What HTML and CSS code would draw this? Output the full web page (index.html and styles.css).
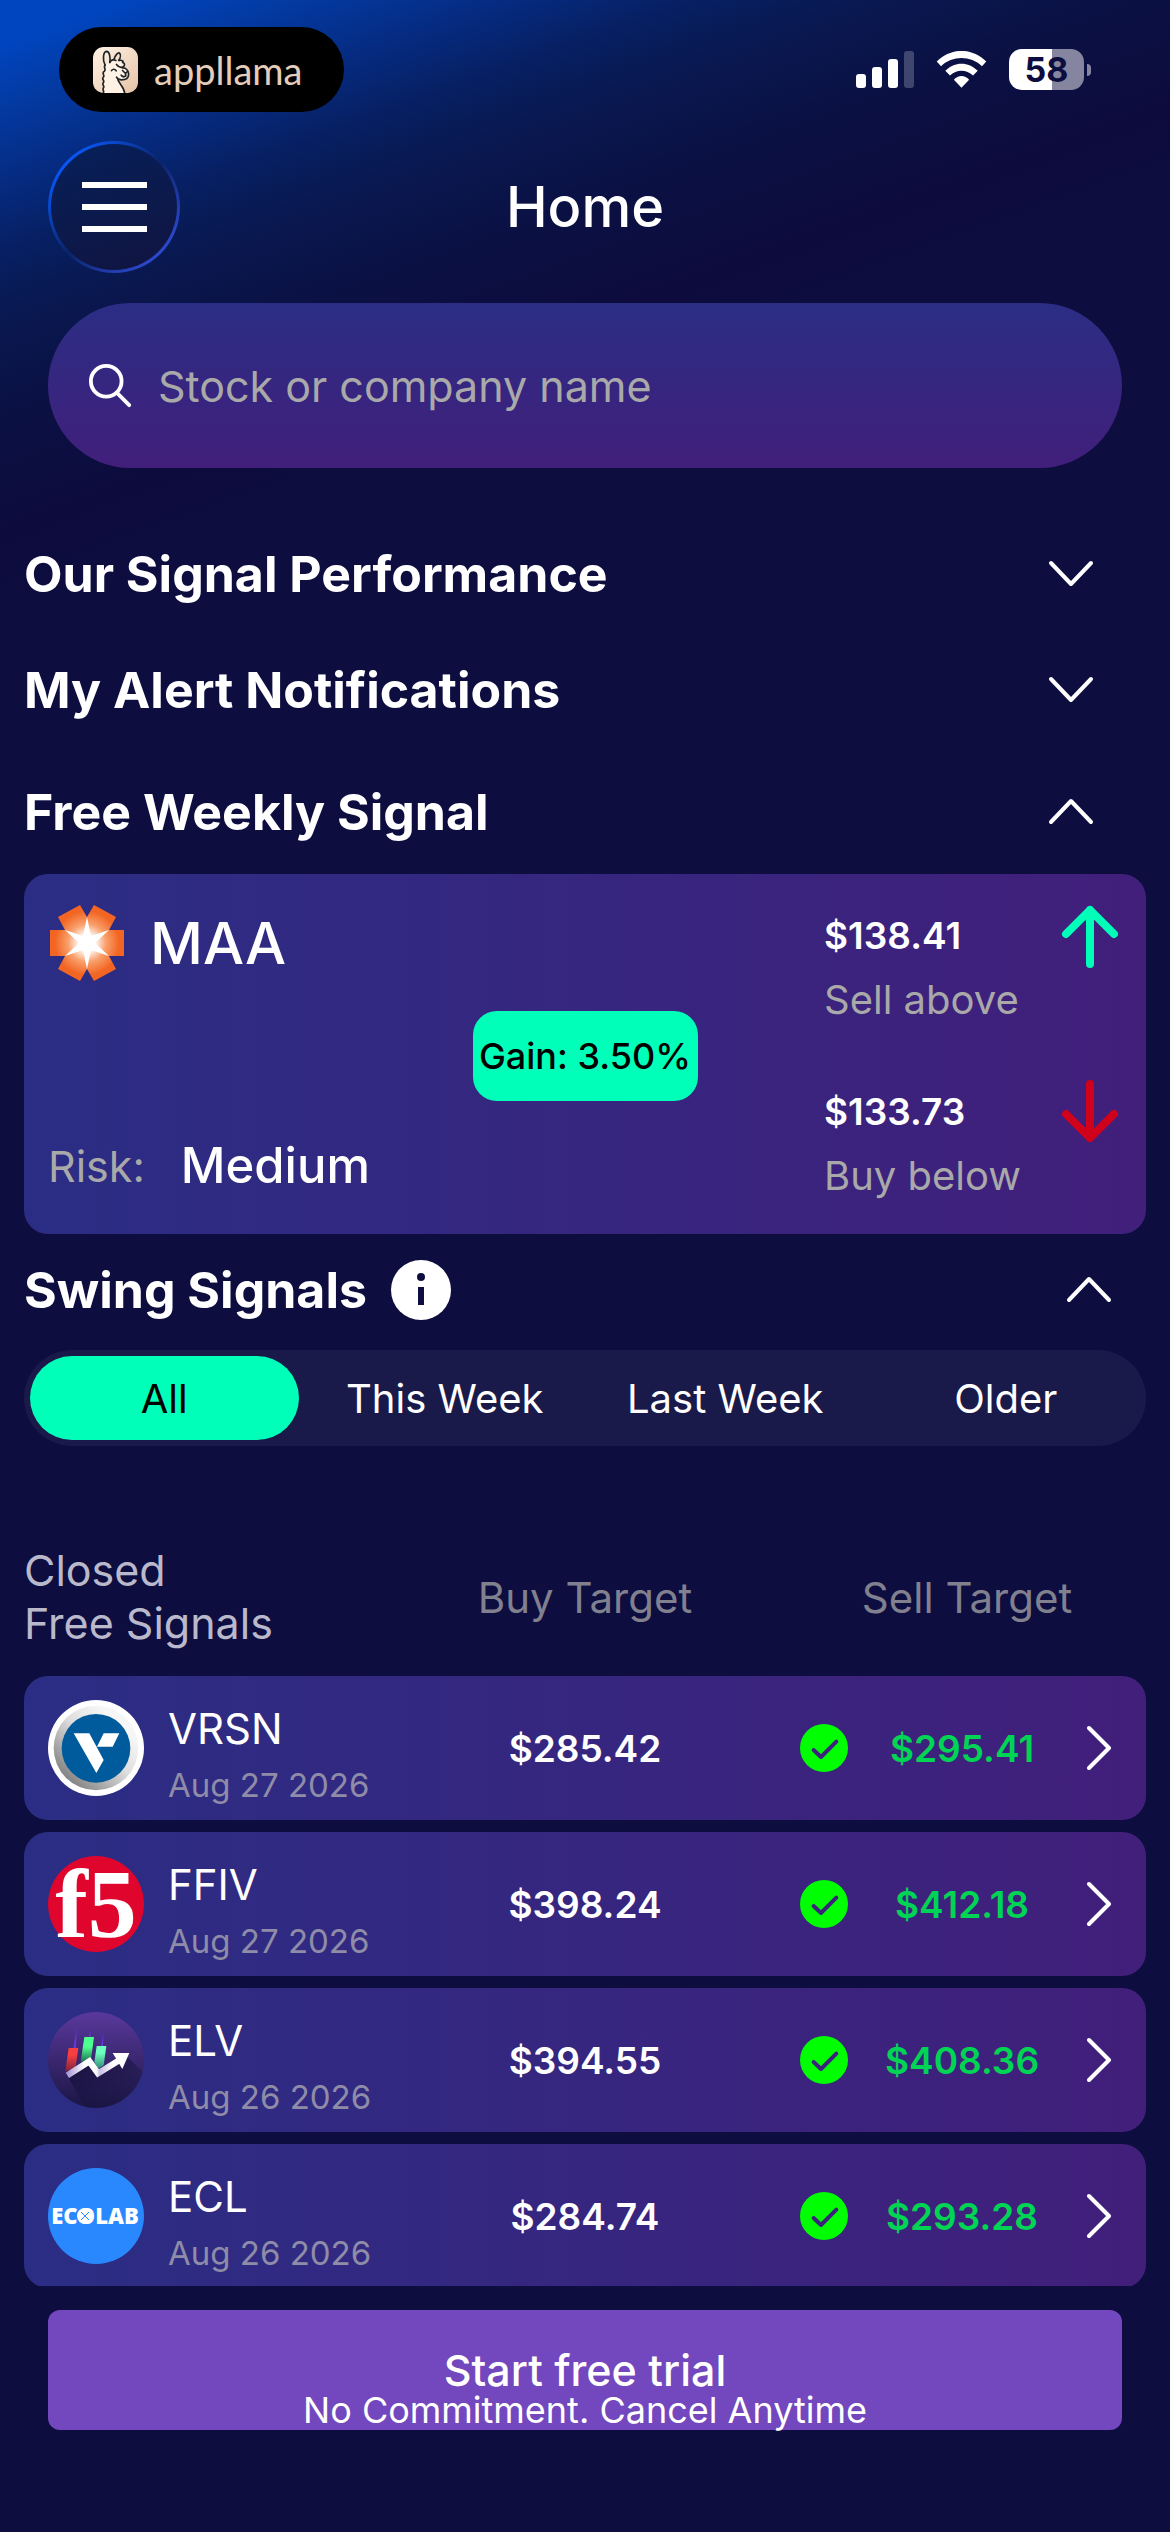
FILE: index.html
```html
<!DOCTYPE html>
<html lang="en">
<head>
    <meta charset="UTF-8">
    <meta name="viewport" content="width=device-width, initial-scale=1.0">
    <title>Home</title>
    <link rel="stylesheet" href="styles.css">
</head>
<body>

<!-- shared icons -->
<svg class="sprite" aria-hidden="true">
    <symbol id="chevron-down" viewBox="0 0 48 32"><path d="M4 5 L24 26 L44 5"/></symbol>
    <symbol id="chevron-up" viewBox="0 0 48 32"><path d="M4 26 L24 5 L44 26"/></symbol>
    <symbol id="chevron-right" viewBox="0 0 24 48"><path d="M2 4 L22 24 L2 44"/></symbol>
    <symbol id="check" viewBox="0 0 144 144">
        <circle cx="72" cy="72" r="72" fill="#00ff00"/>
        <path d="M41 78 L63 99 L109 53" fill="none" stroke="#3b237d" stroke-width="12" stroke-linecap="round" stroke-linejoin="round"/>
    </symbol>
</svg>

<div class="status-bar">
    <div class="island">
        <svg class="llama" viewBox="0 0 134 137" aria-hidden="true">
            <defs>
                <linearGradient id="tile" x1="0" y1="0" x2="1" y2="1">
                    <stop offset="0" stop-color="#fff3e6"/>
                    <stop offset="1" stop-color="#e6c3a6"/>
                </linearGradient>
            </defs>
            <rect width="134" height="137" rx="32" fill="url(#tile)"/>
            <path d="M36 54 C26 70 34 100 30 137 H94 C92 118 80 108 74 97 C94 102 108 92 106 80 C104 68 98 62 88 60 C96 54 96 48 88 46 C90 40 84 38 78 40 L50 44Z" fill="#fff1e3"/>
            <g fill="none" stroke="#1f2428" stroke-width="5" stroke-linecap="round" stroke-linejoin="round">
                <path d="M36 54 C28 40 30 14 40 13 C50 13 52 32 50 46"/>
                <path d="M62 38 C66 24 74 16 79 18 C83 22 82 32 77 40"/>
                <path d="M50 46 C54 38 62 36 68 40 M77 40 C86 38 92 42 88 46 C96 48 96 56 88 60 C80 62 74 58 70 52"/>
                <path d="M88 62 C100 62 106 72 106 82 C106 94 96 98 84 98 C76 97 72 94 70 90 M74 97 C78 110 92 120 94 136"/>
                <path d="M36 54 C30 60 40 66 34 72 C24 76 36 84 31 90 C24 96 36 100 31 106 C25 111 36 117 31 122 C27 128 34 130 31 136"/>
                <path d="M55 70 Q62 62 69 71 M88 70 L97 79 L103 72 M97 79 V86 M84 84 Q90 92 98 86"/>
            </g>
        </svg>
        <span class="island-name">appllama</span>
    </div>
    <div class="status-icons">
        <svg class="signal" viewBox="0 0 58 37" aria-hidden="true">
            <rect x="0" y="23" width="10" height="14" rx="3"/>
            <rect x="16" y="16" width="10" height="21" rx="3"/>
            <rect x="32" y="8" width="10" height="29" rx="3"/>
            <rect x="48" y="0" width="10" height="37" rx="3" opacity=".22"/>
        </svg>
        <svg class="wifi" viewBox="0 0 152 112" aria-hidden="true">
            <path d="M1 32 C44 -11 108 -11 151 32 L138 46 C103 13 49 13 14 46Z"/>
            <path d="M27 60 C55 31 97 31 125 60 L111 74 C91 55 61 55 41 74Z"/>
            <path d="M53 87 C66 72 86 72 99 87 L76 111Z"/>
        </svg>
        <div class="battery"><span class="battery-level">58</span></div>
    </div>
</div>

<header class="app-bar">
    <button class="menu-btn" aria-label="Menu">
        <span class="menu-line"></span>
        <span class="menu-line"></span>
        <span class="menu-line"></span>
    </button>
    <h1>Home</h1>
</header>

<form class="search" role="search">
    <svg class="search-icon" viewBox="0 0 48 48" aria-hidden="true">
        <circle cx="19" cy="19" r="16"/>
        <path d="M30 31 L43 44"/>
    </svg>
    <input type="search" aria-label="Stock or company name" placeholder="Stock or company name">
</form>

<main>
    <h2><button class="accordion">Our Signal Performance <svg class="chevron"><use href="#chevron-down"/></svg></button></h2>
    <h2><button class="accordion">My Alert Notifications <svg class="chevron"><use href="#chevron-down"/></svg></button></h2>

    <section class="weekly">
        <h2><button class="accordion" aria-expanded="true">Free Weekly Signal <svg class="chevron"><use href="#chevron-up"/></svg></button></h2>
        <div class="card">
            <div class="card-left">
                <div class="ticker">
                    <svg class="ticker-logo" viewBox="-39 -39 78 78" aria-hidden="true">
                        <defs>
                            <radialGradient id="glow" gradientUnits="userSpaceOnUse" cx="0" cy="0" r="38">
                                <stop offset="0.2" stop-color="#fff"/>
                                <stop offset="0.5" stop-color="#f9a06c"/>
                                <stop offset="0.85" stop-color="#f26522"/>
                            </radialGradient>
                        </defs>
                        <path fill="url(#glow)" d="M-37 -13 H-22 L-29 -26 L-7 -38 L0 -26 L7 -38 L29 -26 L22 -13 H37 V13 H22 L29 26 L7 38 L0 26 L-7 38 L-29 26 L-22 13 H-37Z"/>
                        <path fill="#fff" d="M0 -26 L4 -7 L22 -13 L8 0 L22 13 L4 7 L0 26 L-4 7 L-22 13 L-8 0 L-22 -13 L-4 -7Z"/>
                    </svg>
                    <span class="ticker-name">MAA</span>
                </div>
                <div class="risk"><span class="risk-label">Risk:</span> <span class="risk-value">Medium</span></div>
            </div>
            <div class="gain">Gain: 3.50%</div>
            <div class="targets">
                <div class="target">
                    <div>
                        <div class="target-price">$138.41</div>
                        <div class="target-label">Sell above</div>
                    </div>
                    <svg class="arrow arrow-up" viewBox="0 0 64 64" aria-hidden="true"><path d="M32 60 V6 M8 30 L32 6 L56 30"/></svg>
                </div>
                <div class="target">
                    <div>
                        <div class="target-price">$133.73</div>
                        <div class="target-label">Buy below</div>
                    </div>
                    <svg class="arrow arrow-down" viewBox="0 0 64 64" aria-hidden="true"><path d="M32 4 V58 M8 34 L32 58 L56 34"/></svg>
                </div>
            </div>
        </div>
    </section>

    <section>
        <div class="swing-head">
            <h2>Swing Signals</h2>
            <button class="icon-btn" aria-label="About swing signals">
                <svg class="info" viewBox="0 0 60 60">
                    <circle cx="30" cy="30" r="30" fill="#fff"/>
                    <circle cx="30" cy="17" r="4" fill="#0d0d40"/>
                    <rect x="27" y="27" width="6" height="18" fill="#0d0d40"/>
                </svg>
            </button>
            <button class="icon-btn swing-toggle" aria-label="Collapse"><svg class="chevron"><use href="#chevron-up"/></svg></button>
        </div>

        <div class="tabs">
            <button class="tab active">All</button>
            <button class="tab">This Week</button>
            <button class="tab">Last Week</button>
            <button class="tab">Older</button>
        </div>

        <table class="signals">
            <thead>
                <tr><th class="th-name">Closed<br>Free Signals</th><th>Buy Target</th><th class="th-sell">Sell Target</th></tr>
            </thead>
            <tbody>
                <tr>
                    <td class="company">
                        <svg class="logo" viewBox="0 0 288 288" aria-hidden="true">
                            <defs>
                                <linearGradient id="ring" x1="0.15" y1="0.85" x2="0.75" y2="0.2">
                                    <stop offset="0" stop-color="#858585"/>
                                    <stop offset="0.6" stop-color="#dedede"/>
                                    <stop offset="1" stop-color="#f6f6f6"/>
                                </linearGradient>
                            </defs>
                            <circle cx="144" cy="144" r="144" fill="#fff"/>
                            <circle cx="144" cy="144" r="127" fill="url(#ring)"/>
                            <circle cx="144" cy="145" r="103" fill="#005b9c"/>
                            <path fill="#fff" d="M77 100 H124 L167 180 L145 219Z M167 100 H214 L194 140 H147Z"/>
                        </svg>
                        <div class="company-text"><div class="symbol">VRSN</div><div class="date">Aug 27 2026</div></div>
                    </td>
                    <td class="buy">$285.42</td>
                    <td class="sell">
                        <svg class="check"><use href="#check"/></svg>
                        <span class="sell-price">$295.41</span>
                        <a class="more" href="#vrsn" aria-label="VRSN details"><svg><use href="#chevron-right"/></svg></a>
                    </td>
                </tr>
                <tr>
                    <td class="company">
                        <svg class="logo" viewBox="0 0 96 96" aria-hidden="true">
                            <circle cx="48" cy="48" r="48" fill="#e0052d"/>
                            <text class="f5-text" x="48" y="81" text-anchor="middle">f5</text>
                        </svg>
                        <div class="company-text"><div class="symbol">FFIV</div><div class="date">Aug 27 2026</div></div>
                    </td>
                    <td class="buy">$398.24</td>
                    <td class="sell">
                        <svg class="check"><use href="#check"/></svg>
                        <span class="sell-price">$412.18</span>
                        <a class="more" href="#ffiv" aria-label="FFIV details"><svg><use href="#chevron-right"/></svg></a>
                    </td>
                </tr>
                <tr>
                    <td class="company">
                        <svg class="logo" viewBox="0 0 288 288" aria-hidden="true">
                            <defs>
                                <linearGradient id="elv-bg" x1="0" y1="0" x2="0" y2="1">
                                    <stop offset="0" stop-color="#5a389c"/>
                                    <stop offset="1" stop-color="#1a1644"/>
                                </linearGradient>
                                <linearGradient id="red" x1="0" y1="0" x2="0" y2="1">
                                    <stop offset="0.3" stop-color="#f83e3e"/>
                                    <stop offset="1" stop-color="#7c2440"/>
                                </linearGradient>
                                <linearGradient id="green" x1="0" y1="0" x2="0" y2="1">
                                    <stop offset="0.4" stop-color="#4dff8e"/>
                                    <stop offset="1" stop-color="#1e6d55"/>
                                </linearGradient>
                                <linearGradient id="teal" x1="0" y1="0" x2="0" y2="1">
                                    <stop offset="0.3" stop-color="#6dffbd"/>
                                    <stop offset="1" stop-color="#318a78"/>
                                </linearGradient>
                                <linearGradient id="line" gradientUnits="userSpaceOnUse" x1="52" y1="0" x2="244" y2="0">
                                    <stop offset="0" stop-color="#9d8bd0"/>
                                    <stop offset="0.3" stop-color="#fff"/>
                                    <stop offset="0.48" stop-color="#fff"/>
                                    <stop offset="0.54" stop-color="#cabfe6"/>
                                    <stop offset="0.75" stop-color="#fff"/>
                                </linearGradient>
                                <linearGradient id="shade" x1="0" y1="0" x2="1" y2="1">
                                    <stop offset="0" stop-color="#140f38"/>
                                    <stop offset="1" stop-color="#1a1644" stop-opacity="0"/>
                                </linearGradient>
                            </defs>
                            <circle cx="144" cy="144" r="144" fill="url(#elv-bg)"/>
                            <path fill="url(#shade)" d="M62 198 L126 152 L150 190 L238 134 L284 180 A144 144 0 0 1 110 284Z"/>
                            <path fill="#6a35e0" d="M86 48 L84 108 H76Z M127 56 L128 74 H122Z M166 60 L165 102 H159Z"/>
                            <path fill="url(#red)" d="M62 108 H91 L82 172 L52 178Z"/>
                            <path fill="url(#green)" d="M109 75 H138 L129 142 L98 150Z"/>
                            <path fill="url(#teal)" d="M146 102 H175 L167 160 L150 170 L139 150Z"/>
                            <path d="M58 190 L124 148 L150 184 L218 142" fill="none" stroke="url(#line)" stroke-width="19"/>
                            <path fill="#fff" d="M194 123 H244 L223 171Z"/>
                        </svg>
                        <div class="company-text"><div class="symbol">ELV</div><div class="date">Aug 26 2026</div></div>
                    </td>
                    <td class="buy">$394.55</td>
                    <td class="sell">
                        <svg class="check"><use href="#check"/></svg>
                        <span class="sell-price">$408.36</span>
                        <a class="more" href="#elv" aria-label="ELV details"><svg><use href="#chevron-right"/></svg></a>
                    </td>
                </tr>
                <tr>
                    <td class="company">
                        <svg class="logo" viewBox="0 0 96 96" aria-hidden="true">
                            <circle cx="48" cy="48" r="48" fill="#2a88ff"/>
                            <text class="ecolab-text" x="47" y="56" text-anchor="middle">ECOLAB</text>
                            <circle cx="37" cy="48" r="8" fill="#fff"/>
                            <path d="M33 44 L41 52 M41 44 L33 52" stroke="#2a88ff" stroke-width="1"/>
                        </svg>
                        <div class="company-text"><div class="symbol">ECL</div><div class="date">Aug 26 2026</div></div>
                    </td>
                    <td class="buy">$284.74</td>
                    <td class="sell">
                        <svg class="check"><use href="#check"/></svg>
                        <span class="sell-price">$293.28</span>
                        <a class="more" href="#ecl" aria-label="ECL details"><svg><use href="#chevron-right"/></svg></a>
                    </td>
                </tr>
            </tbody>
        </table>
    </section>
</main>

<footer>
    <button class="trial-btn">
        <span class="trial-title">Start free trial</span>
        <span class="trial-note">No Commitment. Cancel Anytime</span>
    </button>
</footer>

</body>
</html>
```
FILE: styles.css
```css
* {
    box-sizing: border-box;
}

body {
    margin: 0;
    height: 100vh;
    display: flex;
    flex-direction: column;
    font-family: Inter, "Liberation Sans", sans-serif;
    color: #fff;
    /* blue glow in the top left corner */
    background: linear-gradient(160deg, #0045c0 40px, #033ba5 94px, #06287a 188px, #072063 235px, #091850 300px, #0b1042 400px, #0d0b3e 500px, #0d0d40 580px);
}

h1, h2 {
    margin: 0;
}

button {
    font-family: inherit;
    color: inherit;
    border: none;
    background: none;
    padding: 0;
    cursor: pointer;
}

.sprite {
    display: none;
}

/* status bar */
.status-bar {
    display: flex;
    justify-content: space-between;
    padding: 27px 79px 0 59px;
}

.island {
    display: flex;
    align-items: center;
    gap: 16px;
    height: 85px;
    padding: 0 42px 0 34px;
    border-radius: 43px;
    background: #000;
}

.llama {
    width: 45px;
    height: 46px;
}

.island-name {
    font-family: Lato, sans-serif;
    font-size: 38px;
    line-height: 40px;
    color: #e3cdbb;
}

.status-icons {
    display: flex;
    align-items: center;
    gap: 22px;
    fill: #fff;
}

.signal {
    width: 58px;
    height: 37px;
}

.wifi {
    width: 51px;
    height: 37px;
}

.battery {
    display: flex;
    align-items: center;
    gap: 3px;
}

.battery::after {
    content: "";
    width: 4px;
    height: 12px;
    border-radius: 0 6px 6px 0;
    background: #86859f;
}

.battery-level {
    width: 75px;
    height: 41px;
    border-radius: 13px;
    background: linear-gradient(to right, #fff 58%, #86859f 58%);
    color: #0d0d40;
    font-size: 34px;
    font-weight: 700;
    line-height: 42px;
    text-align: center;
}

/* app bar */
.app-bar {
    display: grid;
    grid-template-columns: 132px 1fr 132px;
    align-items: center;
    padding: 29px 48px 0;
}

.app-bar h1 {
    font-size: 56px;
    font-weight: 500;
    text-align: center;
}

.menu-btn {
    display: flex;
    flex-direction: column;
    align-items: center;
    justify-content: center;
    gap: 16px;
    height: 132px;
    border: 3px solid transparent;
    border-radius: 50%;
    background:
        linear-gradient(160deg, #06205a, #111440) padding-box,
        linear-gradient(135deg, #0a56f5 15%, #0a2468 50%, #2c48cc 85%) border-box;
}

.menu-line {
    width: 65px;
    height: 6px;
    background: #fff;
}

/* search */
.search {
    display: flex;
    align-items: center;
    gap: 24px;
    height: 165px;
    margin: 30px 48px 0;
    padding: 0 40px;
    border-radius: 83px;
    background: linear-gradient(#2b2d84, #411f7b);
}

.search-icon {
    width: 46px;
    height: 46px;
    fill: none;
    stroke: #fff;
    stroke-width: 4;
    stroke-linecap: round;
}

.search input {
    flex: 1;
    min-width: 0;
    padding: 0;
    border: none;
    outline: none;
    background: none;
    font-family: inherit;
    font-size: 43px;
    color: #fff;
}

.search input::placeholder {
    color: #a9a9a9;
    opacity: 1;
}

/* content */
main {
    flex: 1;
    min-height: 0;
    padding: 48px 24px 0;
    overflow-y: auto;
    scrollbar-width: none;
}

h2 {
    font-size: 50px;
    font-weight: 700;
}

.accordion {
    display: flex;
    align-items: center;
    justify-content: space-between;
    width: 100%;
    height: 116px;
    padding-right: 51px;
    font-size: inherit;
    font-weight: inherit;
}

.chevron {
    width: 48px;
    height: 32px;
    fill: none;
    stroke: #fff;
    stroke-width: 4;
    stroke-linecap: round;
    stroke-linejoin: round;
}

.weekly {
    padding-top: 6px;
}

.card {
    display: grid;
    grid-template-columns: 1fr auto 1fr;
    margin-top: 4px;
    padding: 30px 24px 26px;
    border-radius: 24px;
    background: linear-gradient(to right, #2b2d84, #411f7b);
}

.card-left {
    display: flex;
    flex-direction: column;
    justify-content: space-between;
}

.ticker {
    display: flex;
    align-items: center;
    gap: 24px;
}

.ticker-logo {
    width: 78px;
    height: 78px;
}

.ticker-name {
    font-size: 58px;
    font-weight: 500;
    line-height: 78px;
}

.risk {
    display: flex;
    align-items: center;
    gap: 36px;
    padding-bottom: 12px;
    line-height: 60px;
}

.risk-label {
    font-size: 43px;
    color: #a9a9a9;
}

.risk-value {
    font-size: 49px;
    font-weight: 500;
}

.gain {
    align-self: center;
    width: 225px;
    border-radius: 24px;
    background: #00ffb9;
    color: #000;
    font-size: 36px;
    font-weight: 500;
    line-height: 90px;
    text-align: center;
}

.targets {
    display: flex;
    flex-direction: column;
    gap: 48px;
    justify-self: end;
    width: 298px;
}

.target {
    display: flex;
    justify-content: space-between;
    line-height: 64px;
}

.target-price {
    font-size: 37px;
    font-weight: 600;
}

.target-label {
    font-size: 40px;
    color: #a9a9a9;
}

.arrow {
    width: 64px;
    height: 64px;
    fill: none;
    stroke-width: 8;
    stroke-linecap: round;
    stroke-linejoin: round;
}

.arrow-up {
    stroke: #00ffb9;
}

.arrow-down {
    stroke: #d0021b;
}

/* swing signals */
.swing-head {
    display: flex;
    align-items: center;
    gap: 24px;
    height: 112px;
    padding-right: 33px;
}

.icon-btn {
    display: flex;
}

.info {
    width: 60px;
    height: 60px;
}

.swing-toggle {
    margin-left: auto;
}

.tabs {
    display: grid;
    grid-template-columns: repeat(4, 1fr);
    gap: 12px;
    margin-top: 4px;
    padding: 6px;
    border-radius: 48px;
    background: #1a1a4a;
}

.tab {
    height: 84px;
    border-radius: 42px;
    font-size: 40px;
    white-space: nowrap;
}

.tab.active {
    background: #00ffb9;
    color: #000;
}

.signals {
    display: block;
    margin-top: 98px;
}

.signals thead, .signals tbody {
    display: block;
}

.signals tr {
    display: grid;
    grid-template-columns: 1fr 220px 1fr;
    align-items: center;
}

.signals tbody tr {
    height: 144px;
    margin-bottom: 12px;
    padding: 0 24px;
    border-radius: 24px;
    background: linear-gradient(to right, #2b2d84, #411f7b);
}

.signals thead {
    margin-bottom: 26px;
}

.signals td, .signals th {
    padding: 0;
}

.signals th {
    font-size: 42px;
    font-weight: 400;
    line-height: 53px;
    color: #81808e;
}

.signals .th-name {
    font-size: 43px;
    color: #bab9cb;
    text-align: left;
}

.signals .th-sell {
    padding-left: 93px;
}

.company {
    display: flex;
    align-items: center;
    gap: 24px;
}

.company-text {
    padding-top: 18px;
}

.logo {
    width: 96px;
    height: 96px;
}

.f5-text {
    font-family: "Liberation Serif", serif;
    font-size: 98px;
    font-weight: 700;
    fill: #fff;
}

.ecolab-text {
    font-family: "Open Sans", sans-serif;
    font-size: 22px;
    font-weight: 800;
    fill: #fff;
}

.symbol {
    font-size: 42px;
    line-height: 56px;
}

.date {
    font-size: 33px;
    line-height: 56px;
    color: #8f8ca8;
}

.buy {
    font-size: 37px;
    font-weight: 600;
    text-align: center;
}

.signals .sell {
    display: flex;
    align-items: center;
    padding-left: 105px;
}

.check {
    width: 48px;
    height: 48px;
}

.sell-price {
    flex: 1;
    font-size: 37px;
    font-weight: 600;
    color: #00d455;
    text-align: center;
}

.more {
    display: flex;
    justify-content: center;
    width: 46px;
}

.more svg {
    width: 24px;
    height: 48px;
    fill: none;
    stroke: #fff;
    stroke-width: 4;
    stroke-linecap: round;
    stroke-linejoin: round;
}

/* trial button */
footer {
    padding: 24px 48px 102px;
}

.trial-btn {
    display: flex;
    flex-direction: column;
    align-items: center;
    justify-content: flex-end;
    width: 100%;
    height: 120px;
    border-radius: 12px;
    background: #7347be;
}

.trial-title {
    font-size: 43px;
    font-weight: 500;
    line-height: 40px;
}

.trial-note {
    font-size: 36px;
    line-height: 40px;
}
```
